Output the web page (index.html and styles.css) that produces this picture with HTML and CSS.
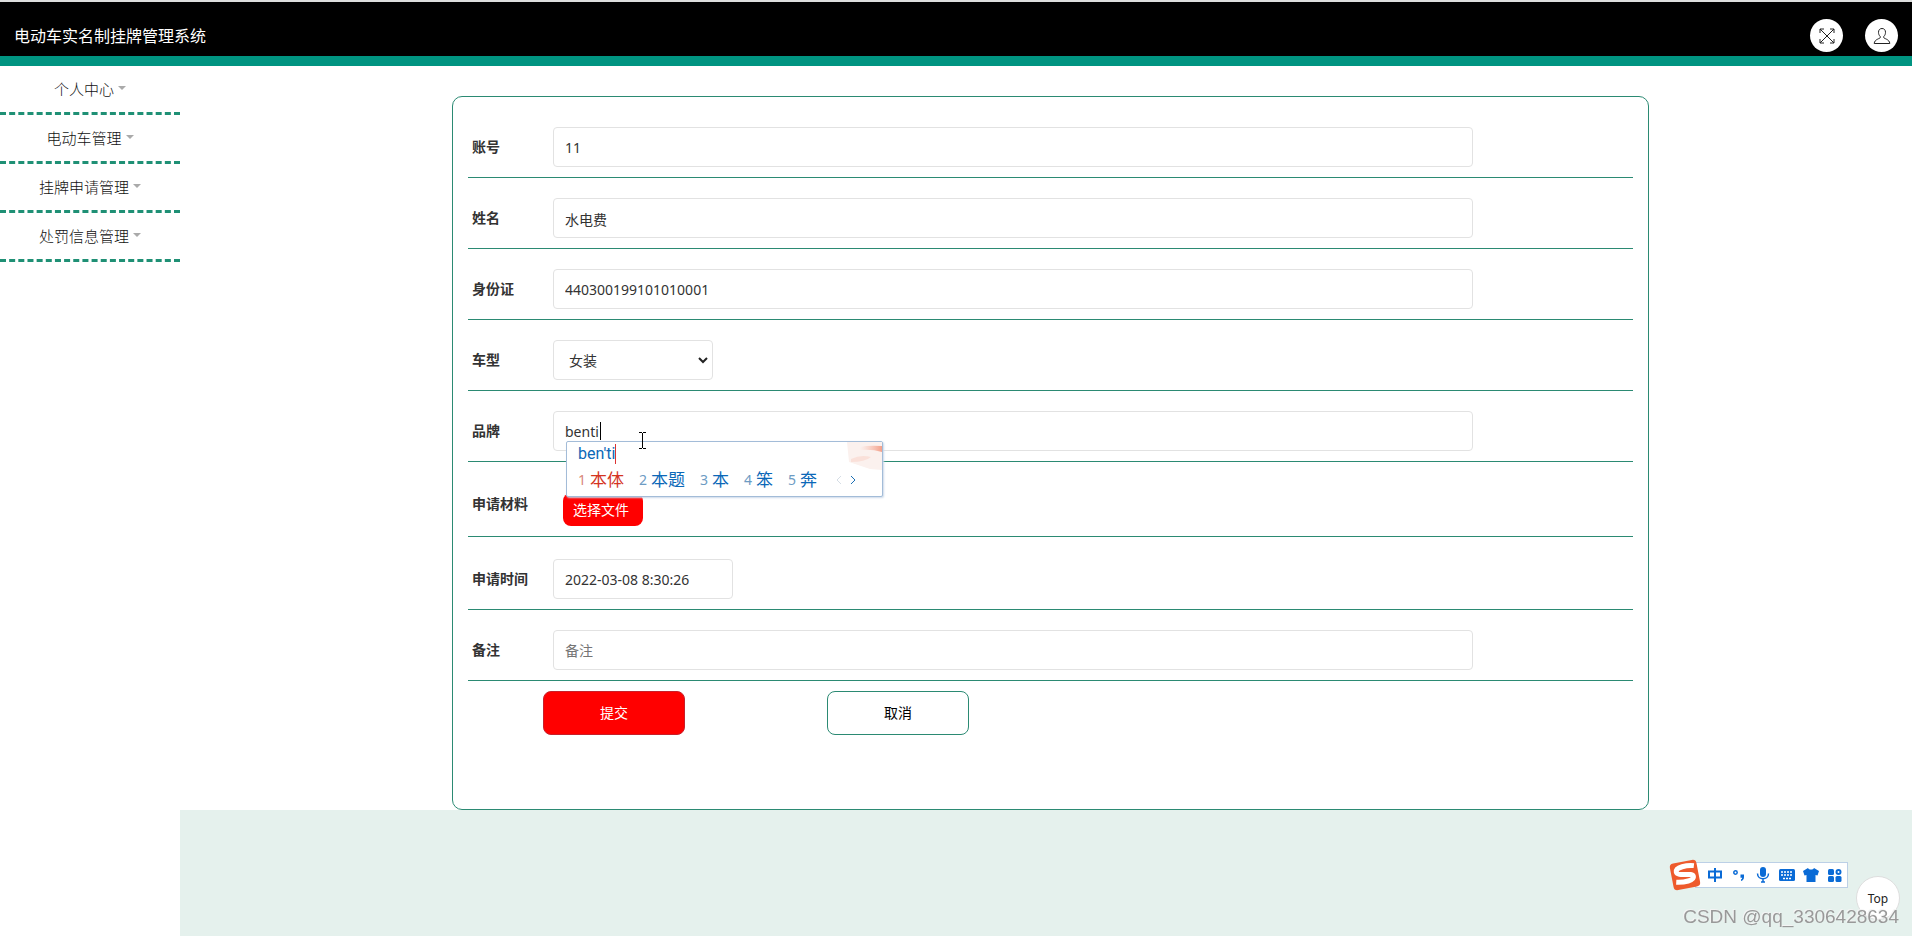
FILE: index.html
```html
<!DOCTYPE html>
<html lang="zh-CN">
<head>
<meta charset="utf-8">
<title>电动车实名制挂牌管理系统</title>
<link rel="stylesheet" href="styles.css">
</head>
<body>
<header class="header">
  <h1 class="brand">电动车实名制挂牌管理系统</h1>
  <div class="tools">
    <button class="round" type="button" aria-label="全屏">
      <svg viewBox="0 0 16 16" width="16" height="16"><path d="M1 1l14 14M15 1L1 15M1 5V1h4M11 1h4v4M15 11v4h-4M5 15H1v-4"/></svg>
    </button>
    <button class="round" type="button" aria-label="用户">
      <svg viewBox="0 0 18 18" width="18" height="18"><path d="M9 1.500c-2.300 0-3.500 1.600-3.500 3.800 0 1.700.6 3.200 1.700 4.100v1.400c0 .7-5.700 1.400-6 5.700h15.600c-.3-4.300-6-5-6-5.700V9.400c1.100-.9 1.700-2.400 1.700-4.100 0-2.200-1.200-3.800-3.500-3.800z"/></svg>
    </button>
  </div>
</header>
<div class="layout">
  <nav class="sidebar">
    <a class="nav-item" href="#">个人中心<span class="caret"></span></a>
    <a class="nav-item" href="#">电动车管理<span class="caret"></span></a>
    <a class="nav-item" href="#">挂牌申请管理<span class="caret"></span></a>
    <a class="nav-item" href="#">处罚信息管理<span class="caret"></span></a>
  </nav>
  <main class="main">
    <div class="page">
      <form class="card">
        <div class="row"><label for="account">账号</label><input class="control" id="account" type="text" value="11"></div>
        <div class="row"><label for="name">姓名</label><input class="control" id="name" type="text" value="水电费"></div>
        <div class="row"><label for="idcard">身份证</label><input class="control" id="idcard" type="text" value="440300199101010001"></div>
        <div class="row"><label for="type">车型</label>
          <div class="select-wrap">
            <select class="control" id="type"><option>女装</option><option>男装</option></select>
            <svg class="chevron" viewBox="0 0 10 7" width="10" height="7"><path d="M1 1l4 4 4-4"/></svg>
          </div>
        </div>
        <div class="row row-brand"><label for="model">品牌</label><input class="control" id="model" type="text" value="benti">
          <span class="text-caret"></span>
          <svg class="ibeam" viewBox="0 0 7 17" width="7" height="17"><path d="M0 .5h3M4 .5h3M3.500 1v15M0 16.500h3M4 16.500h3"/></svg>
          <div class="ime">
            <svg class="ime-skin" viewBox="0 0 36 32" width="36" height="32">
              <defs><linearGradient id="fade" x1="0" y1="0" x2="1" y2="0"><stop offset="0" stop-color="#f7b8a8" stop-opacity="0"/><stop offset="1" stop-color="#f3a08a"/></linearGradient></defs>
              <path d="M1 0h35v28l-12-1L3 20z" fill="#fbf1ee"/>
              <path d="M14 5q8-2 22-1v6q-10-3-22-2z" fill="url(#fade)"/>
              <path d="M5 17q10-5 20-2-6 5-20 5z" fill="#fae0d9"/>
            </svg>
            <div class="ime-input">ben'ti</div>
            <ol class="ime-list">
              <li class="active"><span>1</span>本体</li>
              <li><span>2</span>本题</li>
              <li><span>3</span>本</li>
              <li><span>4</span>笨</li>
              <li><span>5</span>奔</li>
              <li class="ime-pager">
                <svg viewBox="0 0 20 10" width="20" height="10"><path class="dim" d="M5 1L1 5l4 4"/><path d="M15 1l4 4-4 4"/></svg>
              </li>
            </ol>
          </div>
        </div>
        <div class="row row-file"><label for="file">申请材料</label><button class="file" id="file" type="button">选择文件</button></div>
        <div class="row row-date"><label for="date">申请时间</label><input class="control date" id="date" type="text" value="2022-03-08 8:30:26"></div>
        <div class="row"><label for="remark">备注</label><input class="control" id="remark" type="text" placeholder="备注"></div>
        <div class="actions">
          <button class="btn btn-submit" type="button">提交</button>
          <button class="btn" type="button">取消</button>
        </div>
      </form>
    </div>
  </main>
</div>
<div class="ime-bar">
  <svg class="ime-logo" viewBox="0 0 32 32" width="32" height="32">
    <g transform="rotate(-11 16 16)"><rect x="2.500" y="2.500" width="27" height="27" rx="4" fill="#ee5a2c"/>
    <path d="M26.500 8.500C20 6.500 8 6.500 8 11.500c0 5 16 3 16 7.500 0 4-10 4.500-18 2.500" fill="none" stroke="#fff" stroke-width="5"/></g>
  </svg>
  <span class="ime-tools">
    <svg viewBox="0 0 16 16"><path class="line" d="M2 4.500h12v6H2zM8 1v14"/></svg>
    <svg viewBox="0 0 16 16"><circle class="thin" cx="4.500" cy="5.500" r="1.700"/><path d="M9.500 7.500h3.500v2.500q0 3-3 4v-1.500q1.200-.5 1.200-1.700H9.500z"/></svg>
    <svg viewBox="0 0 16 16"><rect x="5" y="0" width="6" height="10" rx="3"/><path class="thin" d="M2.500 6.500c0 7 11 7 11 0M8 12v3M6 15h4"/></svg>
    <svg viewBox="0 0 16 16"><rect x="0" y="2" width="16" height="12" rx="1.500"/><path class="keys" d="M2 5h12M2 8h12M4 11.500h8"/></svg>
    <svg viewBox="0 0 16 16"><path d="M5 1c1 2 5 2 6 0l5 3-1.500 4.500-2-.5v7h-9V8l-2 .5L0 4z"/></svg>
    <svg viewBox="0 0 16 16"><rect x="1" y="2" width="6" height="6" rx="1.500"/><circle class="line" cx="11.500" cy="5" r="2"/><rect x="1" y="9" width="6" height="6" rx="1.500"/><rect x="8.500" y="9" width="6" height="6" rx="1.500"/></svg>
  </span>
</div>
<a class="to-top" href="#">Top</a>
<div class="watermark">CSDN @qq_3306428634</div>
</body>
</html>
```

FILE: styles.css
```css
* { box-sizing: border-box; }
body {
  margin: 0;
  min-height: 100vh;
  display: flex;
  flex-direction: column;
  background: #fff;
  color: #333;
  font: 14px/20px "Noto Sans", "Noto Sans CJK SC", sans-serif;
}
input, select, button { font: inherit; color: inherit; }
svg { display: block; fill: none; stroke: #222; }

.header {
  display: flex;
  justify-content: space-between;
  align-items: center;
  height: 66px;
  padding: 13px 14px 0;
  background: #000;
  border-top: 2px solid #dcdedd;
  border-bottom: 10px solid #009481;
}
.brand { margin: 0; color: #fff; font-size: 16px; font-weight: 400; line-height: 24px; }
.tools { display: flex; gap: 22px; }
.round {
  display: flex;
  align-items: center;
  justify-content: center;
  width: 33px;
  height: 33px;
  padding: 0;
  border: 0;
  border-radius: 50%;
  background: #fff;
}

.layout { flex: 1; display: flex; }
.sidebar { width: 180px; }
.nav-item {
  display: flex;
  align-items: center;
  justify-content: center;
  gap: 4px;
  height: 49px;
  border-bottom: 3px dashed #1f9075;
  color: #111;
  font-size: 15px;
  font-weight: 300;
  text-decoration: none;
}
.caret { margin-bottom: 3px; border: 4px solid transparent; border-top-color: #aaa; border-bottom: 0; }

.main { flex: 1; background: #e5f1ed; }
.page { padding: 30px 263px 0 272px; background: #fff; }
.card {
  padding: 10px 15px 74px;
  border: 1px solid #2b8a73;
  border-radius: 10px;
  background: #fff;
}
.row {
  display: flex;
  align-items: center;
  padding: 20px 0 10px;
  border-bottom: 1px solid #2b8a73;
}
.row label { width: 85px; padding-left: 4px; font-weight: 700; }
.control {
  width: 79%;
  height: 40px;
  padding: 1px 11px 0;
  border: 1px solid #e2e2e2;
  border-radius: 4px;
  background: #fff;
  outline: 0;
}
.control::placeholder { color: #757575; opacity: 1; }
.select-wrap { position: relative; width: 160px; }
.select-wrap .control { width: 100%; padding: 1px 15px 0; appearance: none; }
.chevron { position: absolute; right: 5px; top: 17px; stroke-width: 2; }
.row-brand { position: relative; }
.text-caret { position: absolute; left: 132px; top: 31px; width: 1px; height: 18px; background: #000; }
.ibeam { position: absolute; left: 171px; top: 41px; z-index: 2; stroke: #000; }
.row-file { padding: 31px 0 10px; }
.row-file label { padding-bottom: 11px; }
.file {
  width: 80px;
  height: 33px;
  margin-left: 10px;
  padding: 0 4px 0 0;
  border: 0;
  border-radius: 8px;
  background: #f00;
  color: #fff;
  text-align: center;
}
.row-date { padding-top: 22px; }
.control.date { width: 180px; }
.actions { display: flex; gap: 142px; padding: 10px 0 0 75px; }
.btn {
  width: 142px;
  height: 44px;
  border: 1px solid #2b8a73;
  border-radius: 8px;
  background: #fff;
  color: #000;
}
.btn-submit { background: #f00; border-color: #c8202a; color: #fff; }

.ime {
  position: absolute;
  left: 98px;
  top: 50px;
  z-index: 1;
  width: 317px;
  height: 56px;
  padding: 2px 11px;
  border: 1px solid #a3bcd8;
  border-radius: 2px;
  background: #fff;
  box-shadow: 1px 1px 2px #cddaea;
  color: #0b68b8;
}
.ime-skin { position: absolute; right: 0; top: 0; stroke: none; }
.ime-input { width: fit-content; font: 16px/20px Roboto, sans-serif; border-right: 1px solid #d33; }
.ime-list { display: flex; gap: 15px; margin: 0; padding: 4px 0 0; list-style: none; font-size: 17px; line-height: 24px; }
.ime-list li { display: flex; align-items: center; gap: 4px; }
.ime-list span { color: #6d9bc3; font-size: 14px; }
.ime-list .active { color: #d4341f; }
.ime-list .active span { color: #d9877a; }
.ime-pager { margin-left: 4px; }
.ime-pager svg { stroke: #1a6fb5; }
.ime-pager .dim { stroke: #d5dde5; }

.ime-bar { position: fixed; right: 64px; bottom: 45px; display: flex; align-items: center; }
.ime-logo { z-index: 1; margin-right: -6px; stroke: none; }
.ime-tools {
  display: flex;
  align-items: center;
  gap: 8px;
  height: 26px;
  padding: 0 4px 0 11px;
  border: 1px solid #bcd0e6;
  background: #fff;
}
.ime-tools svg { width: 16px; height: 16px; fill: #0a6bd6; stroke: none; }
.ime-tools .line { fill: none; stroke: #0a6bd6; stroke-width: 2; }
.ime-tools .thin { fill: none; stroke: #0a6bd6; stroke-width: 1.5; }
.ime-tools .keys { stroke: #fff; stroke-width: 1.5; stroke-dasharray: 2 1; }

.to-top {
  position: fixed;
  right: 12px;
  bottom: 16px;
  width: 44px;
  height: 44px;
  border: 1px solid #ddd;
  border-radius: 50%;
  background: #fff;
  color: #222;
  font-size: 12px;
  line-height: 44px;
  text-align: center;
  text-decoration: none;
}
.watermark {
  position: fixed;
  right: 13px;
  bottom: 8px;
  color: #999;
  font: 19px/22px "Liberation Sans", Arial, sans-serif;
  text-shadow: -1px -1px 0 #f4f4f4;
}
```
